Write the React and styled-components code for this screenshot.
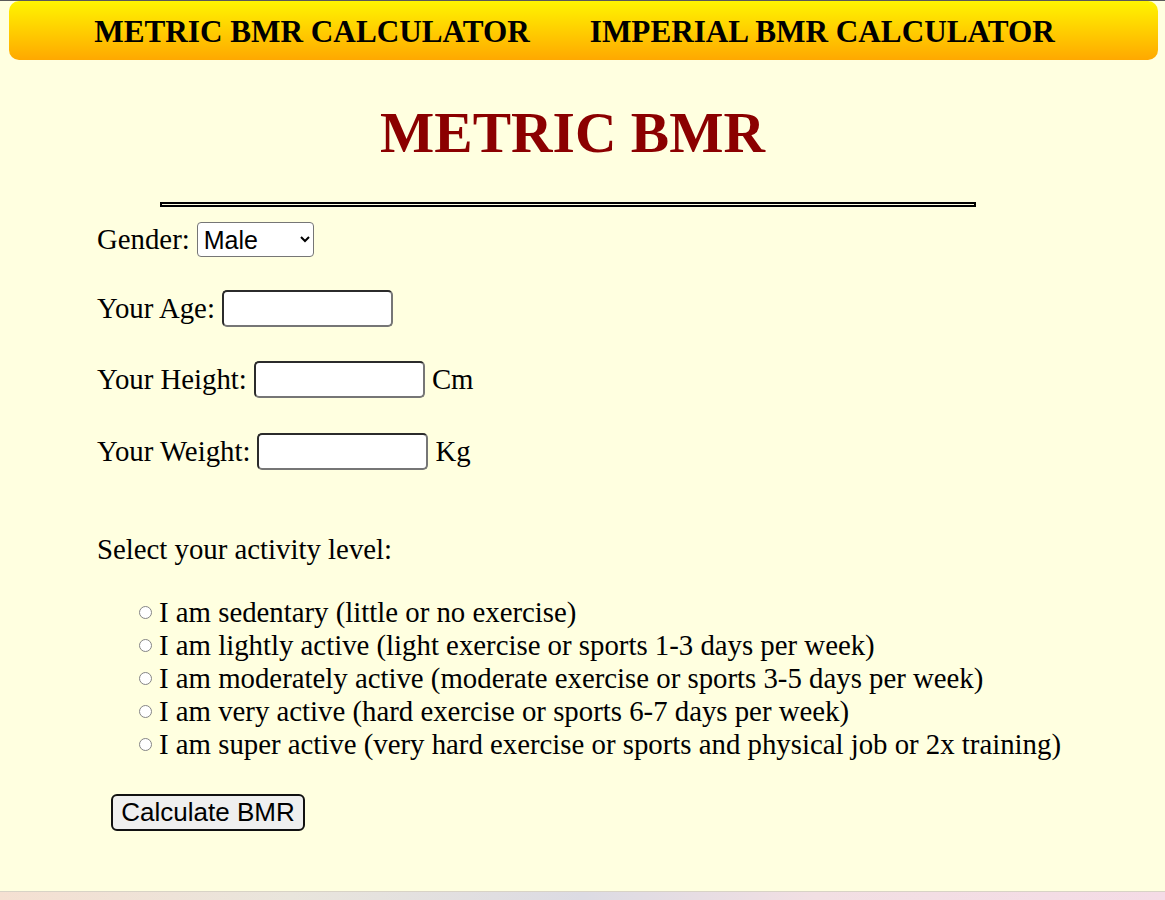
import React from "react";
import styled, { createGlobalStyle } from "styled-components";

const GlobalStyle = createGlobalStyle`
  html, body {
    margin: 0;
    padding: 0;
  }
  body {
    background: #ffffe0;
    font-family: "Liberation Serif", "Times New Roman", serif;
    color: #000;
  }
`;

const Page = styled.div`
  min-height: 900px;
  display: flex;
  flex-direction: column;
`;

const TopEdge = styled.div`
  height: 1px;
  background: #5a5a5a;
`;

const Main = styled.main`
  flex: 1;
`;

const NavBar = styled.nav`
  margin: 0 7px 0 9px;
  height: 59px;
  box-sizing: border-box;
  border-radius: 10px;
  background: linear-gradient(to bottom, #fff500, #ffa800);
  display: flex;
  justify-content: center;
  align-items: center;
  gap: 60px;
  padding: 2px 18px 0 0;
`;

const NavLink = styled.a`
  font-size: 31.2px;
  font-weight: bold;
  color: #000;
  text-decoration: none;
  cursor: pointer;
`;

const Title = styled.h1`
  margin: 37px 0 0;
  padding-right: 20px;
  text-align: center;
  font-size: 57.5px;
  line-height: 72px;
  font-weight: bold;
  color: #8b0000;
`;

const Rule = styled.hr`
  width: 812px;
  height: 1px;
  margin: 33px 0 0 160px;
  padding: 0;
  border: 2px solid #000;
  background: #ffffe0;
  box-sizing: content-box;
`;

const Form = styled.form`
  padding-left: 97px;
  font-size: 28.8px;
`;

const Row = styled.div`
  display: flex;
  align-items: center;
  gap: 7px;
  margin-top: ${(p) => p.$top}px;
  height: ${(p) => p.$h || 37}px;
`;

const Select = styled.select`
  width: 117px;
  height: 35px;
  font-family: Arial, "Liberation Sans", sans-serif;
  font-size: 25px;
  padding: 0 2px;
  border: 1px solid #767676;
  border-radius: 4px;
  background: #fff;
  color: #000;
`;

const Input = styled.input`
  width: 171px;
  height: 37px;
  box-sizing: border-box;
  border: 2px solid;
  border-color: #2b2b2b #767676 #767676 #2b2b2b;
  border-radius: 5px;
  background: #fff;
  font-size: 22px;
`;

const ActivityLabel = styled.div`
  margin-top: 63px;
  line-height: 33px;
`;

const RadioList = styled.div`
  margin-top: 30px;
  padding-left: 42px;
  display: flex;
  flex-direction: column;
`;

const RadioRow = styled.label`
  display: flex;
  align-items: center;
  gap: 7px;
  height: 33px;
`;

const Radio = styled.input`
  appearance: none;
  width: 13px;
  height: 13px;
  margin: 0;
  box-sizing: border-box;
  border: 1px solid #858585;
  border-radius: 50%;
  background: #fff;
  flex-shrink: 0;

  &:checked {
    background: radial-gradient(circle, #0075ff 0 3px, #fff 3.5px);
    border-color: #0075ff;
  }
`;

const SubmitButton = styled.button`
  margin: 33px 0 0 14px;
  width: 194px;
  height: 37px;
  border: 2px solid #111;
  border-radius: 6px;
  background: #efefef;
  font-family: Arial, "Liberation Sans", sans-serif;
  font-size: 26px;
  color: #000;
  padding: 0;
`;

const DesktopStrip = styled.div`
  height: 8px;
  border-top: 1px solid #d8d3c6;
  background: linear-gradient(
    to right,
    #f5e0d2 0%,
    #e9e5dc 25%,
    #dcdbe3 50%,
    #f2dfe3 70%,
    #f5dbe6 100%
  );
`;

const levels = [
  "I am sedentary (little or no exercise)",
  "I am lightly active (light exercise or sports 1-3 days per week)",
  "I am moderately active (moderate exercise or sports 3-5 days per week)",
  "I am very active (hard exercise or sports 6-7 days per week)",
  "I am super active (very hard exercise or sports and physical job or 2x training)",
];

export default function App() {
  return (
    <Page>
      <GlobalStyle />
      <TopEdge />
      <Main>
        <NavBar>
          <NavLink>METRIC BMR CALCULATOR</NavLink>
          <NavLink>IMPERIAL BMR CALCULATOR</NavLink>
        </NavBar>
        <Title>METRIC BMR</Title>
        <Rule />
        <Form onSubmit={(e) => e.preventDefault()}>
          <Row $top={15} $h={35}>
            Gender:
            <Select defaultValue="male">
              <option value="male">Male</option>
              <option value="female">Female</option>
            </Select>
          </Row>
          <Row $top={33}>
            Your Age: <Input type="text" />
          </Row>
          <Row $top={34}>
            Your Height: <Input type="text" /> Cm
          </Row>
          <Row $top={35}>
            Your Weight: <Input type="text" /> Kg
          </Row>
          <ActivityLabel>Select your activity level:</ActivityLabel>
          <RadioList>
            {levels.map((l, i) => (
              <RadioRow key={i}>
                <Radio type="radio" name="activity" value={i} />
                {l}
              </RadioRow>
            ))}
          </RadioList>
          <SubmitButton type="submit">Calculate BMR</SubmitButton>
        </Form>
      </Main>
      <DesktopStrip />
    </Page>
  );
}
